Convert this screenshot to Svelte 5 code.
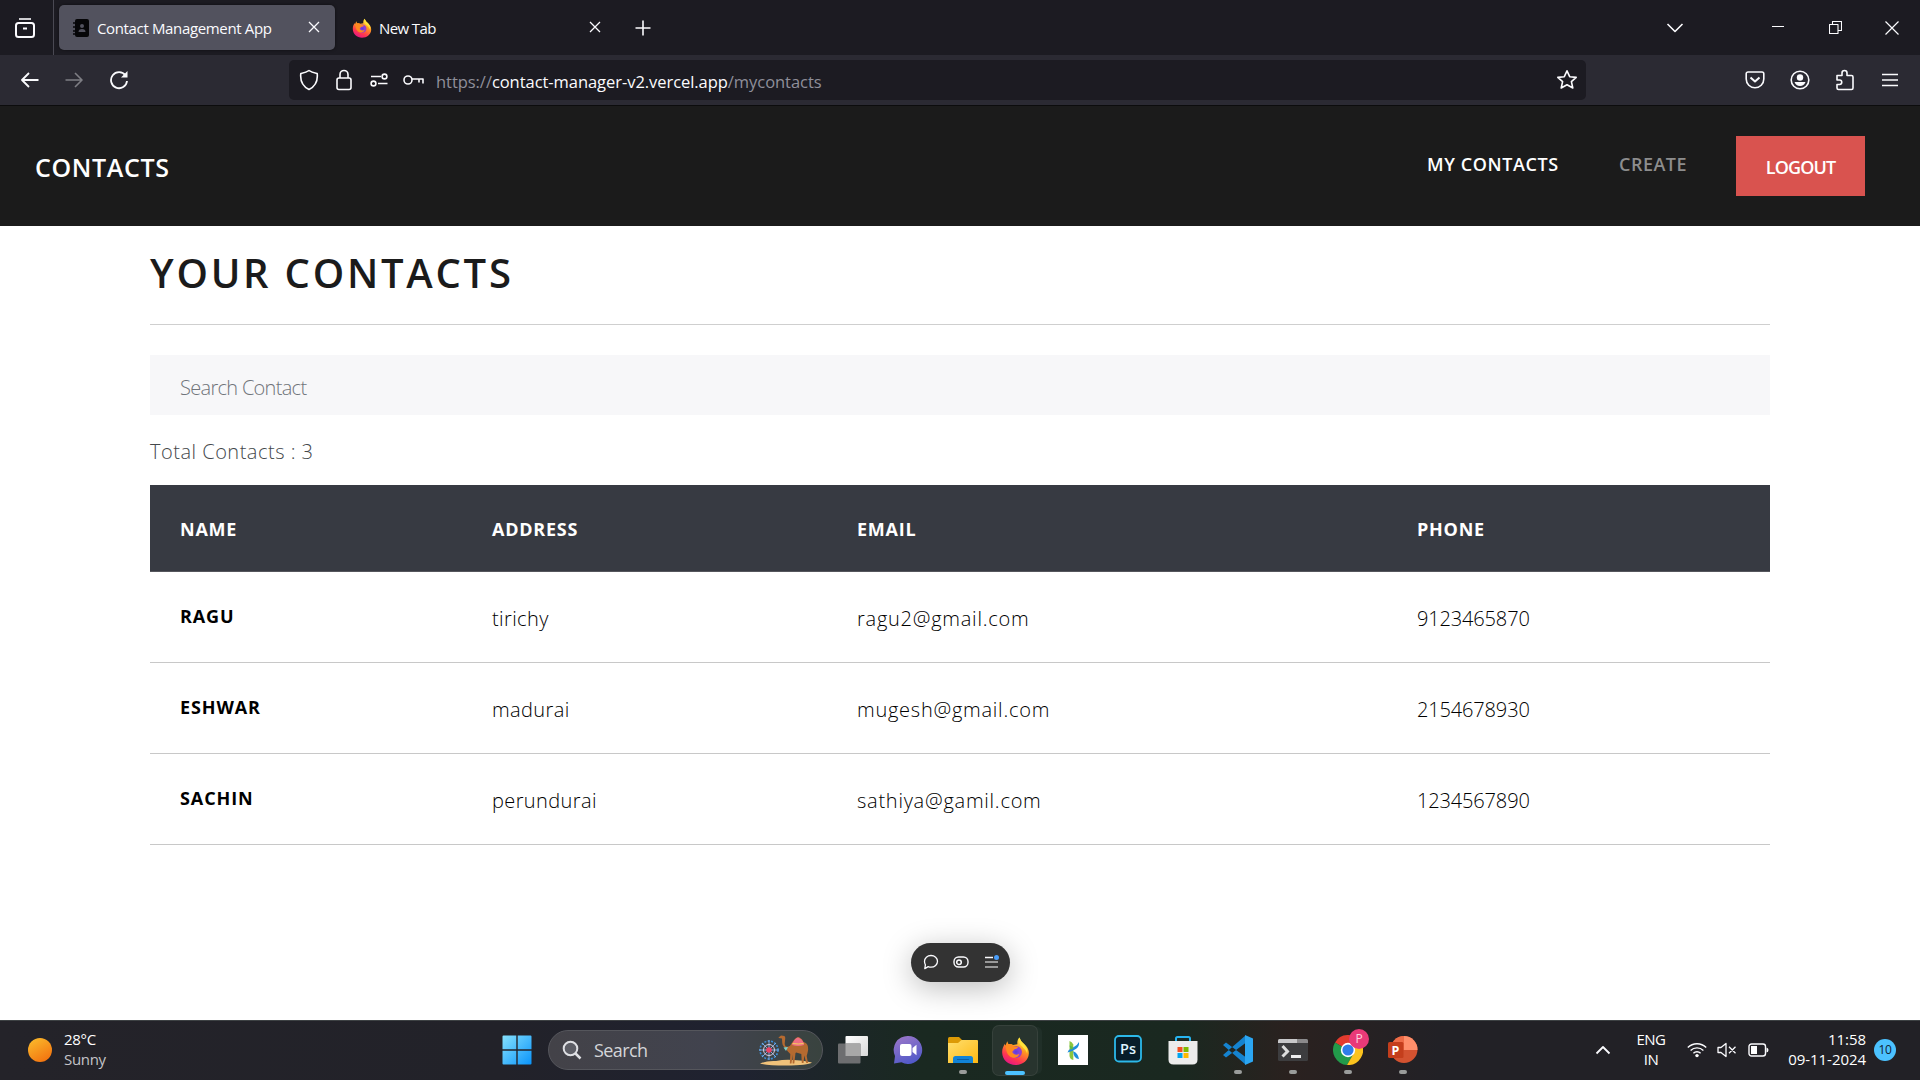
<script>
  const cols = ['NAME', 'ADDRESS', 'EMAIL', 'PHONE'];
  const rows = [
    ['RAGU', 'tirichy', 'ragu2@gmail.com', '9123465870'],
    ['ESHWAR', 'madurai', 'mugesh@gmail.com', '2154678930'],
    ['SACHIN', 'perundurai', 'sathiya@gamil.com', '1234567890']
  ];
</script>

{#snippet firefox()}
  <svg viewBox="0 0 30 30">
    <defs>
      <linearGradient id="fxa" x1=".8" y1="0" x2=".3" y2="1"><stop offset="0" stop-color="#fff44f" /><stop offset=".4" stop-color="#ff9a1f" /><stop offset=".75" stop-color="#ff3750" /><stop offset="1" stop-color="#e31587" /></linearGradient>
      <radialGradient id="fxb"><stop offset="0" stop-color="#5b3fd9" /><stop offset=".6" stop-color="#8a42d8" /><stop offset="1" stop-color="#a03bbd" /></radialGradient>
    </defs>
    <path d="M19 1c1 2 1.500 3.500 3.500 5.500 4 3.500 6.500 6.500 6.300 11C28.500 24.500 22.500 29.500 15 29.500S1.300 24 1.200 16.500C1.100 12.500 2.500 10 4 7.500l.5 2L6.500 5l1.200 3c2-.5 3.600-.3 4.800.8L17 8c-.5-3 .5-5.500 2-7z" fill="url(#fxa)" />
    <circle cx="15.500" cy="16" r="6.200" fill="url(#fxb)" />
    <path d="M4.500 9.500c3-2.500 6.500-2 8.500.5l5 .7c-1 2-2.500 2-4 2.600-1 .6-1.300 2-2.500 2.500 1 2.800 4.500 4 7.500 2-1 4.500-7 5.500-10.500 2C5.500 17 5.500 13 4.500 9.500z" fill="#ff8a1f" />
    <path d="M19 1c1 2 1.500 3.500 3.500 5.500 4 3.500 5.500 7 4.500 11-.8-3-2.500-4.500-4.500-6.500C20 8.800 17 6 19 1z" fill="#ffe23a" />
  </svg>
{/snippet}

<div class="screen">
  <div class="tabs">
    <div class="view">
      <svg width="20" height="20" viewBox="0 0 20 20" class="ln"><path d="M4 1h12" /><rect x="1" y="5" width="18" height="14" rx="2.500" stroke-width="2" /><path d="M8 10.500h4" stroke-width="2" /></svg>
    </div>
    <div class="tab active">
      <svg width="16" height="18" viewBox="0 0 16 18"><rect x="2" y="0" width="14" height="18" rx="2" fill="#060608" /><path d="M0 4h4M0 8h4M0 12h4M0 15h4" stroke="#060608" stroke-width="1.500" /><circle cx="9" cy="7" r="2" fill="#52525e" /><path d="M5.500 13q0-3 3.500-3t3.500 3z" fill="#52525e" /></svg>
      <span class="t1">Contact Management App</span>
      <svg class="x ln" width="12" height="12" viewBox="0 0 12 12"><path d="M1 1l10 10M11 1L1 11" stroke-width="1.300" /></svg>
    </div>
    <div class="tab second">
      <span class="fx">{@render firefox()}</span>
      <span class="t2">New Tab</span>
      <svg class="x ln" width="12" height="12" viewBox="0 0 12 12"><path d="M1 1l10 10M11 1L1 11" stroke-width="1.300" /></svg>
    </div>
    <svg class="plus ln" width="16" height="16" viewBox="0 0 16 16"><path d="M8 .5v15M.5 8h15" /></svg>
    <div class="win">
      <svg class="ln" width="18" height="12" viewBox="0 0 18 12"><path d="M1.500 2L9 9.500 16.500 2" /></svg>
      <svg class="ln min" width="12" height="12" viewBox="0 0 12 12"><path d="M0 4.500h12" stroke-width="1" /></svg>
      <svg class="ln res" width="13" height="13" viewBox="0 0 13 13"><path d="M.5 3.500h8.500v9H.5zM3.500 3.500v-3h9v9H9.500" stroke-width="1.100" /></svg>
      <svg class="ln cls" width="14" height="14" viewBox="0 0 14 14"><path d="M.5.5l13 13M13.500.5l-13 13" stroke-width="1.200" /></svg>
    </div>
  </div>

  <div class="tools">
    <div class="nav">
      <svg class="ln" width="18" height="16" viewBox="0 0 18 16"><path d="M17.500 8H1M8 1L1 8l7 7" stroke-width="1.800" /></svg>
      <svg class="ln dim" width="18" height="16" viewBox="0 0 18 16"><path d="M.5 8H17M10 1l7 7-7 7" /></svg>
      <svg class="ln" width="20" height="20" viewBox="0 0 20 20"><path d="M16.500 5.500A8 8 0 1 0 18 11" stroke-width="1.800" /><path d="M18.500 1v6.500H12z" fill="#fbfbfe" stroke="none" /></svg>
    </div>
    <div class="url">
      <svg class="ln" width="20" height="22" viewBox="0 0 20 22"><path d="M10 1.500C7.500 3.500 4.500 4 1.800 4.500 1 12 4 17.500 10 20.500c6-3 9-8.500 8.200-16C15.500 4 12.500 3.500 10 1.500z" /></svg>
      <svg class="ln lock" width="16" height="22" viewBox="0 0 16 22"><rect x="1" y="9" width="14" height="11.500" rx="2" /><path d="M4 9V5.500a4 4 0 0 1 8 0V9" /></svg>
      <svg class="ln perm" width="18" height="14" viewBox="0 0 18 14"><path d="M1 3.500h10M8 10.500h9.500" /><circle cx="14.500" cy="3.500" r="2.400" /><circle cx="3.500" cy="10.500" r="2.400" /></svg>
      <svg class="ln key" width="21" height="12" viewBox="0 0 21 12"><circle cx="5" cy="6" r="4" /><path d="M9 5h11v4.500M16 5v3.500" /></svg>
      <span class="addr">https://<b>contact-manager-v2.vercel.app</b>/mycontacts</span>
      <svg class="ln star" width="22" height="22" viewBox="0 0 22 22"><path d="M11 1.800l2.700 5.900 6.500.7-4.800 4.300 1.400 6.300L11 15.800 5.200 19l1.400-6.300L1.800 8.400l6.500-.7z" /></svg>
    </div>
    <div class="ext">
      <svg class="ln" width="20" height="20" viewBox="0 0 20 20"><path d="M3 2h14a1.800 1.800 0 0 1 1.800 1.800V9A8.800 8.800 0 0 1 1.200 9V3.800A1.800 1.800 0 0 1 3 2z" /><path d="M5.500 7.500L10 11.500l4.500-4" stroke-width="2" /></svg>
      <svg class="ln" width="20" height="20" viewBox="0 0 20 20"><circle cx="10" cy="10" r="8.800" /><circle cx="10" cy="7.500" r="3.200" fill="#fbfbfe" stroke="none" /><path d="M4.500 12h11q-1.500 4-5.500 4t-5.500-4z" fill="#fbfbfe" stroke="none" /></svg>
      <svg class="ln" width="20" height="22" viewBox="0 0 20 22"><path d="M2 6.500h5V4a2.500 2.500 0 0 1 5 0v2.500h4.500q1.500 0 1.500 1.500v11q0 1.500-1.500 1.500h-13Q2 20.500 2 19v-3.500h2.500a2 2 0 0 0 0-4.500H2z" /></svg>
      <svg class="ln" width="16" height="14" viewBox="0 0 16 14"><path d="M0 1.500h16M0 7h16M0 12.500h16" /></svg>
    </div>
  </div>

  <header>
    <span class="brand">CONTACTS</span>
    <nav>
      <a class="mine">MY CONTACTS</a>
      <a class="create">CREATE</a>
      <button><span>LOGOUT</span></button>
    </nav>
  </header>

  <main>
    <h1>YOUR CONTACTS</h1>
    <hr />
    <div class="search"><span>Search Contact</span></div>
    <p><span>Total Contacts : 3</span></p>
    <div class="row head">
      {#each cols as c}<span>{c}</span>{/each}
    </div>
    {#each rows as r}
      <div class="row">
        {#each r as c, i}<span class={i ? 'cell c' + i : 'name'}>{c}</span>{/each}
      </div>
    {/each}
    <div class="pill">
      <svg class="ln" width="16" height="16" viewBox="0 0 16 16"><path d="M8 1.500c3.700 0 6.500 2.500 6.500 5.800S11.700 13.200 8 13.200c-1 0-2-.2-2.800-.6L1.800 14.600l.6-3.800C1.800 9.800 1.500 8.700 1.500 7.300c0-3.300 2.800-5.800 6.500-5.800z" stroke-width="1.300" /></svg>
      <svg class="ln" width="16" height="12" viewBox="0 0 16 12"><rect x="1" y="1" width="14" height="10" rx="4.500" stroke-width="1.400" /><circle cx="6" cy="6.200" r="2.300" stroke-width="1.500" /></svg>
      <svg class="ln" width="15" height="14" viewBox="0 0 15 14"><path d="M1 2.500h8" stroke-width="1.500" /><path d="M1 7h13M1 12h13" stroke="#bbb" stroke-width="1.500" /><circle cx="12.500" cy="2.500" r="2.500" fill="#4a9df8" stroke="none" /></svg>
    </div>
  </main>

  <footer>
    <div class="weather">
      <i></i>
      <div><span>28°C</span><span class="sun">Sunny</span></div>
    </div>
    <div class="dock">
      <svg class="start" width="30" height="30" viewBox="0 0 30 30"><defs><linearGradient id="wn" x1="0" y1="0" x2="1" y2="1"><stop stop-color="#86e1fd" /><stop offset="1" stop-color="#0a94fa" /></linearGradient></defs><path d="M.5 1.500q0-1 1-1h12.800v13.800H.5zM15.700.5h12.800q1 0 1 1v12.800H15.700zM.5 15.700h13.800v13.800H1.500q-1 0-1-1zM15.700 15.700h13.800v12.800q0 1-1 1H15.700z" fill="url(#wn)" /></svg>
      <div class="find">
        <svg width="20" height="20" viewBox="0 0 20 20" fill="none" stroke="#dfe0e4"><circle cx="8.500" cy="8.500" r="6.800" stroke-width="2" fill="#5d5e66" /><path d="M13.500 13.500l5 5" stroke-width="2.500" /></svg>
        <span>Search</span>
        <svg class="camel" width="54" height="32" viewBox="0 0 54 32">
          <path d="M1 29.500q6-3 16-2.500 9-2 18-1 9 0 18 2.500-4 3-26 3Q9 31.500 1 29.500z" fill="#f0c27a" />
          <g fill="none" stroke="#3c8ed8" stroke-width="1.600"><circle cx="10" cy="16" r="9" stroke-dasharray="2 1.400" /><path d="M10 6v20M0 16h20M3 9l14 14M17 9L3 23" stroke="#7aa9de" stroke-width="1" /></g>
          <circle cx="10" cy="16" r="5.500" fill="none" stroke="#d7c9dc" stroke-width="1" /><circle cx="10" cy="16" r="2.800" fill="#ee4266" />
          <path d="M19.500 3.500L22 1.500l3.500.5.8 1.800-.6 6q.2 3.400 3 3 2.800-.5 4.300-4 3-4.800 6-5.800 3.500.8 5.500 5 4 1 4.500 5 .5 3-.5 6l-.8 3 1.300 7h-1.700l-2-7.500-.8 7.500h-1.700l-.5-9-5-1.500-.8.500-1.200 10.500h-1.700l.2-9-1.300 9H30.800l.5-9.500q-3.500-2.500-4-5.500-3.800-2-4.100-6l-.2-4-3.200-.5z" fill="#b56a30" />
          <path d="M34 8.500q2-4.500 5-5 3.500 1 5.500 5l.5 2.500q-6 2-12 0z" fill="#ef6f83" /><path d="M33.500 9.500q6 1 11 0" stroke="#f5d25c" fill="none" /><path d="M24.500 13.500l4.500-.5-2 4z" fill="#7fd0c8" />
        </svg>
      </div>
      <div class="app"><svg viewBox="0 0 30 30"><defs><linearGradient id="tv" x1="0" y1="0" x2="1" y2="1"><stop stop-color="#fff" /><stop offset="1" stop-color="#d9d9d9" /></linearGradient></defs><rect x="7.500" y="1" width="22.500" height="20" rx="1" fill="url(#tv)" /><rect x="0" y="8.500" width="22.500" height="20" rx="1" fill="#6d6e70" /><path d="M7.500 8.500h15V21h-15z" fill="#a8a8a8" /></svg></div>
      <div class="app"><svg viewBox="0 0 30 30"><defs><linearGradient id="ch" x1=".2" y1="0" x2=".6" y2="1"><stop stop-color="#9a76c8" /><stop offset="1" stop-color="#5059c9" /></linearGradient></defs><path d="M15 1a14 14 0 1 1-6.500 26.300L1 28.500l1-7.500A14 14 0 0 1 15 1z" fill="url(#ch)" /><rect x="7" y="9" width="11.500" height="12" rx="2" fill="#fff" /><path d="M19.500 13l4-3.200v10.400l-4-3.200z" fill="#fff" /></svg></div>
      <div class="app run"><svg viewBox="0 0 30 30"><defs><linearGradient id="fo" x1="0" y1="0" x2="1" y2="1"><stop stop-color="#ffdf6e" /><stop offset="1" stop-color="#fdb813" /></linearGradient></defs><path d="M0 3.500Q0 2 1.500 2H11l3 3-2 4H0z" fill="#dc9a06" /><path d="M0 8h10l3.500-3H29q1 0 1 1v22H0z" fill="url(#fo)" /><path d="M5 28v-4.500q0-2.500 2.500-2.500h15q2.500 0 2.500 2.500V28z" fill="#1183d6" /><path d="M9 24.500h12" stroke="#0b5ea5" /></svg></div>
      <div class="app run on">{@render firefox()}</div>
      <div class="app"><svg viewBox="0 0 30 30"><path d="M0 0h30v30H0z" fill="#fff" /><path d="M11.500 6q2.500.5 3.800 3.500V25q-3.300-.5-3.800-4z" fill="#8cc63f" /><path d="M9.500 17.500q1.500-3.500 5.500-5 4-1.500 6-5.500.5 4-2.500 6.500t-9 4zM15 16.200q5 1.500 6 7.800-5 0-6-7.800z" fill="#1f8fdc" /><path d="M11.500 10.500q2.500.5 3.800 3l-2.600 1.300z" fill="#5bb947" /></svg></div>
      <div class="app"><svg viewBox="0 0 30 30"><rect x="2" y="1" width="26" height="25.500" rx="4" fill="#071d2a" stroke="#2cb9ea" stroke-width="1.800" /><text x="15" y="18.500" text-anchor="middle" font-size="14.500" font-weight="600" fill="#dff4ff" textLength="16" lengthAdjust="spacingAndGlyphs">Ps</text></svg></div>
      <div class="app"><svg viewBox="0 0 30 30"><path d="M8 7V3.500Q8 2 9.500 2h11Q22 2 22 3.500V7" fill="none" stroke="#27b4f0" stroke-width="2" /><path d="M.5 6h29v18.500q0 5-5 5h-19q-5 0-5-5z" fill="#ececec" /><path d="M9.500 12h5v5h-5z" fill="#f25022" /><path d="M15.500 12h5v5h-5z" fill="#7fba00" /><path d="M9.500 18h5v5h-5z" fill="#00a4ef" /><path d="M15.500 18h5v5h-5z" fill="#ffb900" /></svg></div>
      <div class="app run"><svg viewBox="0 0 30 30"><path d="M0 10l3-2.500L22.500 22v7.500zM0 20l3 2.500L22.500 8V.5z" fill="#1583cf" /><path d="M22 0l8 3.500v23L22 30z" fill="#2ba6f2" /></svg></div>
      <div class="app run"><svg viewBox="0 0 30 30"><rect y="4" width="30" height="22" rx="1.500" fill="#3d3d3f" /><path d="M0 8V5.500Q0 4 1.500 4H19v4z" fill="#c8c8ca" /><path d="M19 4h9.500Q30 4 30 5.500V8H19z" fill="#8b8a8c" /><path d="M4.500 11l5 5.500-5 5" fill="none" stroke="#ddd" stroke-width="3" /><path d="M13 21.500h10" stroke="#eee" stroke-width="3" /></svg></div>
      <div class="app run"><svg viewBox="0 0 30 30"><path d="M15 15L2 7.500A15 15 0 0 1 28 7.500z" fill="#e33b2e" /><path d="M2 7.500A15 15 0 0 0 14 30l7-12-6-3z" fill="#229a4a" /><path d="M28 7.500A15 15 0 0 1 14 30l7.500-13L19 7.500z" fill="#fcc31e" /><circle cx="15" cy="15" r="7.200" fill="#fff" /><circle cx="15" cy="15" r="5.600" fill="#2f7de9" /></svg><em>P</em></div>
      <div class="app run"><svg viewBox="0 0 30 30"><circle cx="16" cy="14.500" r="13.500" fill="#d35230" /><path d="M16 1A13.500 13.500 0 0 1 29.500 15H16z" fill="#ff8f6b" /><path d="M16 1A13.500 13.500 0 0 0 2.500 15H16z" fill="#ed6c47" /><rect y="7" width="15.500" height="16" rx="1.500" fill="#c43e1c" /><text x="7.500" y="19.500" text-anchor="middle" font-size="12.500" font-weight="700" fill="#fff">P</text></svg></div>
    </div>
    <div class="tray">
      <svg class="ln" width="16" height="10" viewBox="0 0 16 10"><path d="M1.500 8.500L8 2l6.500 6.500" stroke-width="1.800" /></svg>
      <div class="lang"><span>ENG</span><span>IN</span></div>
      <svg class="ln wifi" width="20" height="16" viewBox="0 0 20 16"><path d="M.8 5.500a13 13 0 0 1 18.400 0M3.600 8.500a9 9 0 0 1 12.800 0M6.400 11.300a5 5 0 0 1 7.200 0" stroke-width="1.400" /><circle cx="10" cy="13.600" r="1.700" fill="#fff" stroke="none" /></svg>
      <svg class="ln vol" width="20" height="16" viewBox="0 0 20 16"><path d="M1 5.500h3L9 1.500v13l-5-4H1zM12 4.800l6.500 6.500M18.500 4.800L12 11.300" stroke-width="1.300" /></svg>
      <svg class="ln bat" width="21" height="14" viewBox="0 0 21 14"><rect x="1" y="1" width="16.500" height="12" rx="2.500" stroke-width="1.400" /><rect x="3" y="3" width="6" height="8" fill="#fff" stroke="none" /><path d="M18.500 4.500q2 .5 2 2.500t-2 2.500z" fill="#fff" stroke="none" /></svg>
      <div class="time"><span>11:58</span><span>09-11-2024</span></div>
      <div class="count">10</div>
    </div>
  </footer>
</div>

<style>
  :global(body) { background: #fff; overflow: hidden; }
  * { box-sizing: border-box; }
  .screen { width: 1920px; height: 1080px; display: flex; flex-direction: column; font-family: 'Segoe UI', 'Open Sans', 'Noto Sans', sans-serif; white-space: nowrap; }
  svg { display: block; flex: none; }
  .ln { fill: none; stroke: #fbfbfe; stroke-width: 1.6; stroke-linejoin: round; }
  .tabs { height: 55px; flex: none; background: #1c1b22; display: flex; align-items: center; color: #fbfbfe; font-size: 15px; }
  .view { width: 54px; height: 55px; border-right: 1px solid #4a4953; padding: 18px 0 0 15px; margin-right: 5px; }
  .tab { width: 276px; height: 45px; border-radius: 5px; display: flex; align-items: center; padding: 0 15px 0 14px; }
  .active { background: #52525e; box-shadow: 0 0 3px #0008; }
  .tab span { margin-left: 8px; }
  .tab .fx { width: 20px; margin: 0 0 0 3px; }
  .tab .t2 { letter-spacing: -0.6px; margin-left: 7px; }
  .t1 { letter-spacing: -0.35px; }
  .tab .x { margin: -1px 0 0 auto; }
  .tab.second { width: 281px; margin-right: 19px; }
  .win { margin-left: auto; display: flex; align-items: center; padding-right: 21px; }
  .win .min { margin-left: 88px; }
  .win .res { margin-left: 45px; }
  .win .cls { margin-left: 43px; }
  .tools { height: 51px; flex: none; background: #2b2a33; border-bottom: 1px solid #0c0c0d; display: flex; align-items: center; }
  .nav { width: 289px; display: flex; align-items: center; gap: 26px; padding-left: 21px; }
  .url { width: 1297px; height: 40px; border-radius: 5px; background: #1c1b22; display: flex; align-items: center; padding: 0 8px 0 10px; }
  .dim { opacity: .4; }
  .lock { margin-left: 17px; }
  .perm { margin-left: 18px; }
  .key { margin-left: 15px; }
  .addr { margin: 3px 0 0 12px; font-size: 16.500px; color: #8f8f9a; letter-spacing: -0.05px; }
  .addr b { font-weight: 400; color: #fbfbfe; }
  .star { margin-left: auto; }
  .ext { margin-left: auto; display: flex; align-items: center; gap: 25px; padding-right: 22px; }
  .ext svg:nth-child(3) { margin-right: 2px; }
  header { height: 120px; flex: none; background: #1b1b1b; color: #fff; display: flex; align-items: center; padding: 0 55px 0 35px; font-weight: 600; }
  .brand { font-size: 25px; margin-top: 2px; letter-spacing: .65px; }
  nav { margin-left: auto; display: flex; align-items: center; font-size: 18px; }
  .mine { width: 192px; letter-spacing: .6px; margin-top: -5px; }
  .create { width: 117px; color: #8d8d8d; letter-spacing: .5px; margin-top: -5px; }
  button { width: 129px; height: 60px; border: 0; padding: 1px 0 0; background: #d9534f; color: #fff; font: inherit; letter-spacing: -0.9px; }
  main { flex: 1; padding: 0 150px; display: flex; flex-direction: column; align-items: stretch; }
  h1 { margin: 0; height: 98px; padding-top: 20px; font-size: 40px; line-height: 54px; font-weight: 600; color: #1b1b1b; letter-spacing: 2.75px; }
  hr { width: 100%; height: 1px; border: 0; background: #cfcfcf; margin: 0 0 30px; flex: none; }
  .search { height: 60px; background: #f7f7f9; padding: 4px 30px 0; font-size: 20px; line-height: 57px; font-weight: 300; color: #70747a; letter-spacing: -0.7px; }
  p { margin: 0; height: 70px; font-size: 20px; line-height: 74px; font-weight: 300; color: #44484b; letter-spacing: .5px; }
  .row { height: 91px; border-bottom: 1px solid #c8c8c8; display: grid; grid-template-columns: 312px 365px 560px 383px; padding-left: 30px; line-height: 88px; flex: none; font-size: 18px; color: #000; }
  .head { height: 87px; background: #373a42; border-bottom-color: #55565c; color: #fff; font-weight: 700; line-height: 88px; letter-spacing: .75px; }
  .name { font-weight: 700; color: #000; letter-spacing: .9px; }
  .cell { font-weight: 300; font-size: 20px; padding-top: 3px; letter-spacing: .75px; }
  .c1 { letter-spacing: .4px; }
  .c3 { letter-spacing: -.15px; }
  .pill { width: 99px; height: 39px; margin: 98px auto 0; border-radius: 20px; background: #333; display: flex; align-items: center; justify-content: space-between; padding: 0 11px 1px 12px; box-shadow: 0 6px 30px #0004; }
  footer { height: 60px; flex: none; border-top: 1px solid #3d4143; padding-bottom: 1px; background: linear-gradient(90deg, #242329 0, #222229 500px, #1f2230 740px, #1a2921 920px, #1a2820 1180px, #2a211f 1290px, #222126 1440px, #222126 100%); color: #fff; display: flex; align-items: center; font-size: 15px; position: relative; z-index: 1; }
  .weather { width: 502px; display: flex; align-items: center; padding-left: 28px; gap: 12px; line-height: 20px; letter-spacing: -0.3px; }
  .weather i { width: 24px; height: 24px; border-radius: 50%; background: linear-gradient(150deg, #fbbf2d, #f26a0c); }
  .weather div, .lang, .time { margin-bottom: 2px; }
  .weather span, .lang span, .time span { display: block; }
  .sun { color: #c4c4c8; }
  .dock { display: flex; align-items: center; }
  .find { width: 275px; height: 40px; margin: 0 2px 0 16px; border: 1px solid #55565c; border-radius: 20px; background: linear-gradient(90deg, #434248, #41434e 60%, #39433f); display: flex; align-items: center; padding: 0 9px 0 13px; font-size: 18px; color: #d4d5d8; }
  .find span { margin-left: 12px; letter-spacing: -0.6px; }
  .camel { margin-left: auto; }
  .app { width: 55px; height: 50px; padding: 10px 12.500px; position: relative; }
  .app svg { width: 30px; height: 30px; }
  .run::after { content: ''; position: absolute; left: 24px; bottom: 1px; width: 8px; height: 4px; border-radius: 2px; background: #9a9c9b; }
  .on { background: #28342e; border-radius: 6px; width: 44px; margin: 0 8px 0 3px; padding: 10px 8px; box-shadow: 0 0 0 1px #36413b, 6px 0 0 -1px #202f28; height: 49px; }
  .on svg { width: 29px; }
  .run.on::after { left: 12px; bottom: 0; width: 20px; background: #4cc2ff; }
  .app em { position: absolute; left: 29px; top: 4px; width: 20px; height: 20px; border-radius: 50%; background: #e93a78; font: 12px/20px 'Open Sans', sans-serif; text-align: center; color: #ffd0df; }
  .tray { margin-left: auto; display: flex; align-items: center; padding-right: 24px; line-height: 20px; letter-spacing: -0.3px; }
  .lang { width: 32px; margin-left: 24px; text-align: center; letter-spacing: -0.5px; }
  .wifi { margin-left: 20px; }
  .vol { margin-left: 10px; }
  .bat { margin-left: 11px; }
  .time { width: 97px; text-align: right; letter-spacing: -0.05px; }
  .count { width: 22px; height: 22px; margin-left: 8px; border-radius: 50%; background: #4cc2ff; color: #123; font-size: 12px; line-height: 22px; text-align: center; }
</style>
